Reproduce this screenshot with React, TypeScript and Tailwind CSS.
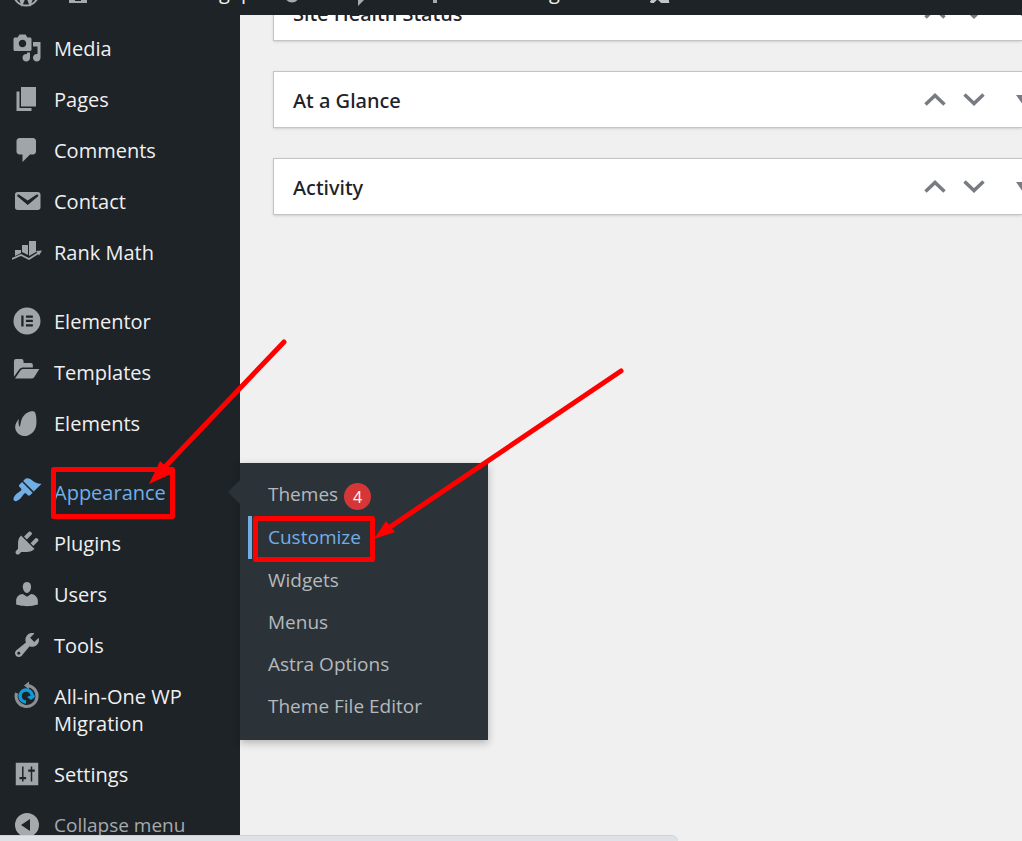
import React from 'react';

const paths = {
  media: 'M13 11V4c0-.55-.45-1-1-1h-1.67L9 1H5L3.67 3H2c-.55 0-1 .45-1 1v7c0 .55.45 1 1 1h10c.55 0 1-.45 1-1zM7 4.5c1.38 0 2.5 1.12 2.5 2.5S8.38 9.5 7 9.5 4.5 8.38 4.5 7 5.62 4.5 7 4.5zM14 6h5v10.5c0 1.38-1.12 2.5-2.5 2.5S14 17.88 14 16.5s1.12-2.5 2.5-2.5c.17 0 .34.02.5.05V9h-3V6zm-4 8.05V13h2v3.5c0 1.38-1.12 2.5-2.5 2.5S7 17.88 7 16.5 8.12 14 9.5 14c.17 0 .34.02.5.05z',
  pages: 'M6 15V2h10v13H6zm-1 1h8v2H3V5h2v11z',
  comments: 'M5 2h9c1.1 0 2 .9 2 2v7c0 1.1-.9 2-2 2h-2l-5 5v-5H5c-1.1 0-2-.9-2-2V4c0-1.1.9-2 2-2z',
  email: 'M3.87 4h13.25C18.37 4 19 4.59 19 5.79v8.42c0 1.19-.63 1.79-1.88 1.79H3.87c-1.25 0-1.88-.6-1.88-1.79V5.79c0-1.2.63-1.79 1.88-1.79zm6.62 8.6l6.74-5.53c.24-.2.43-.66.13-1.07-.29-.41-.82-.42-1.17-.17l-5.7 3.86L4.8 5.83c-.35-.25-.88-.24-1.17.17-.3.41-.11.87.13 1.07z',
  elementor: 'M10 1a9 9 0 1 0 0 18 9 9 0 0 0 0-18zM6.2 6.4h1.5v7.2H6.2zM9.3 6.4h4.6v1.5H9.3zM9.3 9.2h4.6v1.5H9.3zM9.3 12.1h4.6v1.5H9.3z',
  templates: 'M1.3 13.2V2.8Q1.3 1.4 2.7 1.4H6.3Q7.7 1.4 7.7 2.8V4H12.6Q13.9 4 13.9 5.3V7H7.2Q5.8 7 4.9 8.2zM2 14.4L5.6 9Q6.2 8 7.2 8H18.2L14.9 13.4Q14.2 14.4 13 14.4z',
  elements: 'M14.7 2.3C12 1.7 8.7 3.4 7 6.4 5.6 9 5.8 11.2 5.2 12.6 4.3 11.4 4.2 9.8 4.6 7.4 2.3 9.8 1.3 13 3 15.7c1.6 2.7 4.9 3.7 8 2.4 3.3-1.3 5.2-4.1 5.3-8.4.1-3.4-.4-6.9-1.6-7.4z',
  appearance: 'M14.48 11.06L7.41 3.99l1.5-1.5c.5-.56 2.3-.47 3.51.32 1.21.8 1.43 1.28 2.91 2.1 1.18.64 2.45 1.26 4.45.85zm-.71.71L6.7 4.7 4.93 6.47c-.39.39-.39 1.02 0 1.41l1.06 1.06c.39.39.39 1.03 0 1.42-.6.6-1.43 1.11-2.21 1.69-.35.26-.7.53-1.01.84C1.43 14.23.4 16.08 1.4 17.07c.99 1 2.84-.03 4.18-1.36.31-.31.58-.66.85-1.02.57-.78 1.08-1.61 1.69-2.21.39-.39 1.02-.39 1.41 0l1.06 1.06c.39.39 1.02.39 1.41 0z',
  plugins: 'M13.11 4.36L9.87 7.6 8 5.73l3.24-3.24c.35-.34 1.05-.2 1.56.32.52.51.66 1.21.31 1.55zm-8 1.77l.91-1.12 9.01 9.01-1.19.84c-.71.71-2.63 1.16-3.82 1.16H6.14L4.9 17.26c-.59.59-1.54.59-2.12 0-.59-.58-.59-1.53 0-2.12l1.24-1.24v-3.88c0-1.13.4-3.19 1.09-3.89zm7.26 3.97l3.24-3.24c.34-.35 1.04-.21 1.55.31.52.51.66 1.21.31 1.55l-3.24 3.25z',
  users: 'M10 9.25c-2.27 0-2.73-3.44-2.73-3.44C7 4.02 7.82 2 9.97 2c2.16 0 2.98 2.02 2.71 3.81 0 0-.41 3.44-2.68 3.44zm0 2.57L12.72 10c2.39 0 4.52 2.33 4.52 4.53v2.49s-3.65 1.13-7.24 1.13c-3.65 0-7.24-1.13-7.24-1.13v-2.49c0-2.25 1.94-4.48 4.47-4.48z',
  tools: 'M16.68 9.77c-1.34 1.34-3.3 1.67-4.95.99l-5.41 6.52c-.99.99-2.59.99-3.58 0s-.99-2.59 0-3.57l6.52-5.42c-.68-1.65-.35-3.61.99-4.95 1.28-1.28 3.12-1.62 4.72-1.06l-2.89 2.89 2.82 2.82 2.86-2.87c.53 1.58.18 3.39-1.08 4.65zM3.81 16.21c.4.39 1.04.39 1.43 0 .4-.4.4-1.04 0-1.43-.39-.4-1.03-.4-1.43 0-.39.39-.39 1.03 0 1.43z',
  settings: 'M2.5 2.5h15v15h-15zM6.7 5v7H5v1.5h1.7V15h1v-1.5h1.7V12H7.7V5zM12.5 5v2h-1.7v1.5h1.7V15h1V8.5h1.7V7h-1.7V5z',
  collapse: 'M10 2a8 8 0 1 0 0 16 8 8 0 0 0 0-16zM12 6v8l-6-4z',
};

const Icon: React.FC<{ d: string }> = ({ d }) => (
  <svg viewBox="0 0 20 20" className="size-[30px] shrink-0" fill="currentColor" fillRule="evenodd" aria-hidden="true">
    <path d={d} />
  </svg>
);

const RankMathIcon = () => (
  <svg viewBox="0 0 30 30" className="size-[30px] shrink-0" fill="currentColor" aria-hidden="true">
    <path d="M3 13h6v3l-6 3zM10 8h6v10l-6-3zM17 4h7v11l-7 4z" />
    <path d="M0 22l9-4 8 4 11-7" fill="none" stroke="currentColor" strokeWidth="1.8" />
    <path d="M24 14l6-.5-3 5z" />
  </svg>
);

const MigrationIcon = () => (
  <svg viewBox="0 0 30 30" className="size-[30px] shrink-0" fill="none" aria-hidden="true">
    <path d="M4.5 12A10.5 10.5 0 1 0 15 4.5" stroke="#8c9094" strokeWidth="3" />
    <path d="M12 4.5l5-4v8z" fill="#8c9094" />
    <path d="M14 21a6 6 0 1 1 6-7" stroke="#0f9bd7" strokeWidth="3.5" />
    <path d="M15 16l4 3 4-3-1-3z" fill="#0f9bd7" />
  </svg>
);

const menuGroups = [
  [
    { label: 'Media', icon: <Icon d={paths.media} /> },
    { label: 'Pages', icon: <Icon d={paths.pages} /> },
    { label: 'Comments', icon: <Icon d={paths.comments} /> },
    { label: 'Contact', icon: <Icon d={paths.email} /> },
    { label: 'Rank Math', icon: <RankMathIcon /> },
  ],
  [
    { label: 'Elementor', icon: <Icon d={paths.elementor} /> },
    { label: 'Templates', icon: <Icon d={paths.templates} /> },
    { label: 'Elements', icon: <Icon d={paths.elements} /> },
  ],
  [
    { label: 'Appearance', icon: <Icon d={paths.appearance} /> },
    { label: 'Plugins', icon: <Icon d={paths.plugins} /> },
    { label: 'Users', icon: <Icon d={paths.users} /> },
    { label: 'Tools', icon: <Icon d={paths.tools} /> },
    { label: 'All-in-One WP Migration', icon: <MigrationIcon /> },
    { label: 'Settings', icon: <Icon d={paths.settings} /> },
  ],
];

const submenu = ['Themes', 'Customize', 'Widgets', 'Menus', 'Astra Options', 'Theme File Editor'];

// The bar is scrolled almost out of view, only its lower edge shows
const AdminBar = () => (
  <header className="relative z-10 flex h-[15px] shrink-0 items-end overflow-hidden bg-[#1d2327] pb-2 pl-3 text-[20px] leading-[27px] text-[#f0f0f1]">
    <a href="#wp" aria-label="WordPress" className="text-[#a7aaad]">
      <svg viewBox="0 0 28 28" className="size-7" fill="none" stroke="currentColor" aria-hidden="true">
        <circle cx="14" cy="14" r="12.5" strokeWidth="2" />
        <path d="M5 9l5 14 4-10 4 10 5-14" strokeWidth="3.5" />
      </svg>
    </a>
    <a href="#site" className="flex items-end">
      <svg viewBox="0 0 20 20" className="mb-1 ml-7 size-5 text-[#a7aaad]" fill="currentColor" aria-hidden="true">
        <path d="M1 9l9-8 9 8v11H1zM7 14v4h6v-4z" fillRule="evenodd" />
      </svg>
      <span className="mb-0.5 ml-[131px] w-[66px]">gap</span>
    </a>
    <a href="#updates" aria-label="Updates" className="mb-1 text-[#a7aaad]">
      <svg viewBox="0 0 16 16" className="size-4" fill="none" stroke="currentColor" strokeWidth="3" aria-hidden="true">
        <circle cx="7" cy="8" r="6" />
      </svg>
    </a>
    <a href="#comments" aria-label="Comments" className="mb-px ml-[51px] text-[#a7aaad]">
      <svg viewBox="0 0 20 20" className="size-5" fill="currentColor" aria-hidden="true">
        <path d="M0 0h20v13h-7l-7 7v-7H0z" />
      </svg>
    </a>
    <a href="#new" aria-label="New" className="mb-1 ml-[56px] text-[#a7aaad]">
      <svg viewBox="0 0 14 14" className="size-[14px]" fill="none" stroke="currentColor" strokeWidth="4" aria-hidden="true">
        <path d="M7 0v14M0 7h14" />
      </svg>
    </a>
    <a href="#more" className="mb-0.5 ml-[107px] w-[100px]">g</a>
    <svg viewBox="0 0 20 20" className="mb-1 ml-px size-5 text-[#c3c4c7]" fill="none" stroke="currentColor" strokeWidth="4" aria-hidden="true">
      <path d="M1 20l6-6 3 2 3 3 6-1" />
    </svg>
  </header>
);

const Submenu = () => (
  <div className="absolute -top-1 left-full w-[248px] bg-[#2c3338] pt-[10px] pb-[13px] text-[19px] leading-[42px] text-[#b4b9be] shadow-[0_3px_8px_rgba(0,0,0,0.25)]">
    <span className="absolute top-[17px] right-full border-y-12 border-r-12 border-y-transparent border-r-[#2c3338]" />
    <ul>
      {submenu.map((label) => (
        <li key={label}>
          <a
            href="#submenu"
            className={
              label === 'Customize'
                ? 'ml-2 flex items-center border-l-4 border-[#72aee6] pl-4 leading-[43px] text-[#72aee6]'
                : label === 'Themes'
                  ? 'flex items-center pl-7 leading-[43px]'
                  : 'flex items-center pl-7'
            }
          >
            {label}
            {label === 'Themes' && (
              <span className="mt-1 ml-1.5 flex size-[27px] items-center justify-center rounded-full bg-[#d63638] text-[16px] leading-none text-white">4</span>
            )}
          </a>
        </li>
      ))}
    </ul>
  </div>
);

const Sidebar = () => (
  <nav className="relative z-20 w-60 shrink-0 bg-[#1d2327] pt-2 text-[20px] leading-[27px] text-[#f0f0f1]">
    {menuGroups.map((group, index) => (
      <ul key={index} className="mb-[18px] last-of-type:mb-0">
        {group.map((item) => {
          const active = item.label === 'Appearance';
          return (
            <li key={item.label} className="relative">
              <a href="#menu" className={active ? 'flex gap-3 py-3 pr-8 pl-3 text-[#72aee6]' : 'flex gap-3 py-3 pr-8 pl-3'}>
                <span className={active ? '-mt-1 -mb-1 h-[30px]' : '-mt-0.5 -mb-1 h-[30px] text-[#a0a5aa]'}>{item.icon}</span>
                <span>{item.label}</span>
              </a>
              {active && <Submenu />}
            </li>
          );
        })}
      </ul>
    ))}
    <button type="button" className="flex w-full gap-3 py-3 pl-3 text-left text-[19px] text-[#a7aaad]">
      <span className="-mt-0.5 -mb-1 h-[30px]"><Icon d={paths.collapse} /></span>
      Collapse menu
    </button>
  </nav>
);

const Panel: React.FC<{ title: string }> = ({ title }) => (
  <section className="flex h-[57px] items-center border border-r-0 border-[#c3c4c7] bg-white pl-[19px] text-[#1d2327] shadow-sm">
    <h2 className="flex-1 pt-0.5 font-['Noto_Sans',sans-serif] text-[20px] font-medium">{title}</h2>
    <div className="-mr-2 flex items-center text-[#787c82]">
      <button type="button" aria-label="Move up" className="mr-[17px]">
        <svg viewBox="0 0 22 14" className="h-[14px] w-[22px]" fill="none" stroke="currentColor" strokeWidth="3.5" aria-hidden="true">
          <path d="M1.5 11.5l9.5-9 9.5 9" />
        </svg>
      </button>
      <button type="button" aria-label="Move down" className="mr-[31px]">
        <svg viewBox="0 0 22 14" className="h-[14px] w-[22px]" fill="none" stroke="currentColor" strokeWidth="3.5" aria-hidden="true">
          <path d="M1.5 1.5l9.5 9 9.5-9" />
        </svg>
      </button>
      <button type="button" aria-label="Toggle panel">
        <svg viewBox="0 0 14 10" className="h-[10px] w-[14px]" fill="currentColor" aria-hidden="true">
          <path d="M0 0h14L7 10z" />
        </svg>
      </button>
    </div>
  </section>
);

// Red boxes and arrows drawn over the page
const Annotations = () => (
  <svg className="pointer-events-none absolute top-0 left-0 z-40 h-[841px] w-[1022px]" viewBox="0 0 1022 841" fill="none" stroke="#ff0000" aria-hidden="true">
    <g strokeWidth="5" strokeLinejoin="round" strokeLinecap="round">
      <rect x="53.5" y="469.5" width="119" height="47" />
      <rect x="255.5" y="518.5" width="117" height="41" />
      <path d="M284 342L163 469M621 371L390 527" />
    </g>
    <path d="M149 484L160 461L173 473zM374 539L386 521L395 532z" fill="#ff0000" stroke="none" />
  </svg>
);

export default function App() {
  return (
    <div className="relative flex h-screen flex-col overflow-hidden bg-[#f0f0f0] font-['Open_Sans','Noto_Sans',sans-serif]">
      <AdminBar />
      <div className="flex min-h-0 flex-1">
        <Sidebar />
        <main className="-mt-[31px] flex min-w-0 flex-1 flex-col gap-[30px] pl-[33px]">
          <Panel title="Site Health Status" />
          <Panel title="At a Glance" />
          <Panel title="Activity" />
        </main>
      </div>
      <div className="absolute bottom-0 left-0 z-30 h-[6px] w-[678px] rounded-tr-md border-t border-[#d0d3d6] bg-[#dee1e5]" />
      <Annotations />
    </div>
  );
}
